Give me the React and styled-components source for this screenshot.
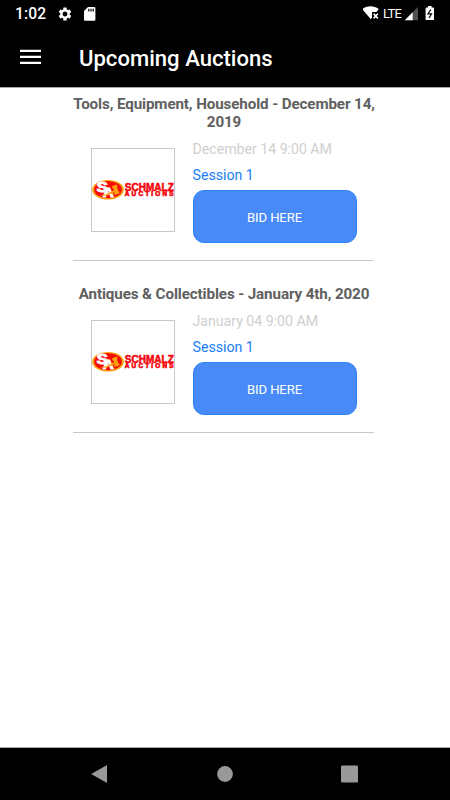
import React from "react";
import styled, { createGlobalStyle } from "styled-components";
import { MdSettings } from "react-icons/md";

const GlobalStyle = createGlobalStyle`
  * { box-sizing: border-box; }
  html, body { margin: 0; padding: 0; background: #fff; }
  body { font-family: Roboto, "Liberation Sans", sans-serif; }
`;

const Screen = styled.div`
  width: 450px;
  height: 800px;
  display: flex;
  flex-direction: column;
  overflow: hidden;
  background: #fff;
`;

const StatusBar = styled.div`
  height: 27px;
  flex: none;
  display: flex;
  align-items: center;
  justify-content: space-between;
  padding: 0 15px 0 15px;
  background: #000;
  color: #fff;
`;

const StatusGroup = styled.div`
  display: flex;
  align-items: center;
  height: 27px;
`;

const Clock = styled.span`
  width: 42px;
  font-size: 15.6px;
  font-weight: 500;
  line-height: 27px;
  padding-top: 1px;
  letter-spacing: 0.1px;
`;

const Network = styled.span`
  width: 21px;
  font-size: 13px;
  line-height: 27px;
  letter-spacing: -0.7px;
  margin-left: -1px;
  margin-right: 1px;
`;

const Gear = styled(MdSettings)`
  width: 16px;
  height: 16px;
  margin-right: 11px;
`;

const AppBar = styled.header`
  height: 61px;
  flex: none;
  display: flex;
  align-items: center;
  padding: 0 20px 1px;
  background: #000;
  border-bottom: 1px solid #a8a8a8;
  color: #fff;
`;

const MenuButton = styled.button`
  width: 59px;
  height: 40px;
  padding: 0;
  border: 0;
  background: none;
  color: #fff;
  display: flex;
  align-items: center;
`;

const PageTitle = styled.h1`
  margin: 2px 0 0;
  font-size: 22.1px;
  font-weight: 500;
  line-height: 28px;
  white-space: nowrap;
`;

const AuctionList = styled.main`
  flex: 1;
  display: flex;
  flex-direction: column;
  align-items: center;
  gap: 24px;
  padding: 7px 3px 0 0;
`;

const Auction = styled.section`
  width: 301px;
  border-bottom: 1px solid #c8c8c8;
  padding-bottom: 17px;
`;

const AuctionTitle = styled.h2`
  margin: 0 -4px;
  padding-left: 1px;
  text-align: center;
  font-size: 15.2px;
  font-weight: 700;
  line-height: 18px;
  letter-spacing: -0.12px;
  color: #606060;
`;

const AuctionBody = styled.div`
  display: flex;
  padding-left: 18px;
  gap: 17.5px;
`;

const Thumb = styled.div`
  width: 84px;
  height: 84px;
  margin-top: 17px;
  border: 1px solid #c8c8c8;
  display: flex;
  align-items: center;
  justify-content: center;
`;

const Details = styled.div`
  width: 164px;
  display: flex;
  flex-direction: column;
  padding-top: 5px;
`;

const Line = styled.div`
  height: 26px;
  line-height: 26px;
  font-size: 14.2px;
  letter-spacing: -0.03px;
  white-space: nowrap;
  color: ${(p) => (p.$link ? "#1a7df5" : "#cfcfcf")};
`;

const BidButton = styled.button`
  height: 53px;
  margin-top: 2px;
  padding: 1px 0 0;
  border: 1px solid #2a82f6;
  border-radius: 11px;
  background: #488bf8;
  color: #fff;
  font: 400 13.1px Roboto, "Liberation Sans", sans-serif;
  letter-spacing: -0.1px;
`;

const NavBar = styled.nav`
  height: 53px;
  flex: none;
  display: flex;
  align-items: center;
  justify-content: space-between;
  padding: 0 91px 1px 90px;
  background: #000;
  border-top: 1px solid #a8a8a8;
`;

const SdCard = () => (
  <svg width="12" height="14" viewBox="0 0 12 14">
    <path d="M4 0h6.2A1.2 1.2 0 0 1 11.4 1.2v11.3a1.2 1.2 0 0 1-1.2 1.2H1.2A1.2 1.2 0 0 1 0 12.5V4z" fill="#fff" />
    <path d="M4.8 1.8v2.6M7 1.8v2.6M9.2 1.8v2.6" stroke="#000" strokeWidth="1.2" />
  </svg>
);

const Wifi = () => (
  <svg width="21" height="15" viewBox="0 0 21 15">
    <path d="M-.8 3C4.4-.7 10.6-.7 15.8 3L13.4 6H9v5.4L7.8 13.2z" fill="#fff" />
    <path d="M10.6 7.8l4.2 4.6M14.8 7.8l-4.2 4.6" stroke="#fff" strokeWidth="1.6" />
  </svg>
);

const Signal = () => (
  <svg width="20" height="14" viewBox="0 0 20 14">
    <path d="M13 0v13.3H-.4z" fill="#505050" />
    <path d="M7.7 5.2v8.1H-.4z" fill="#fff" />
  </svg>
);

const Battery = () => (
  <svg width="10" height="15" viewBox="0 0 10 15">
    <path d="M3 0h3.6v1.5h1.5q.9 0 .9.9v10.8q0 .9-.9.9H1.5q-.9 0-.9-.9V2.4q0-.9.9-.9H3z" fill="#fff" />
    <path d="M5.7 3.6L3 7.8h3.6L4 12" fill="none" stroke="#000" strokeWidth="1.2" />
  </svg>
);

const MenuIcon = () => (
  <svg width="22" height="16" viewBox="0 0 22 16">
    <path d="M0 1.8h21M0 7.8h21M0 13.8h21" stroke="#fff" strokeWidth="2.3" />
  </svg>
);

const SchmalzLogo = () => (
  <svg width="82" height="22" viewBox="0 0 82 22" fontFamily='"Liberation Sans", sans-serif' fontWeight="700">
    <ellipse cx="16" cy="10.7" rx="15.8" ry="9.8" fill="#f9a20d" />
    <ellipse cx="16" cy="10.7" rx="13.8" ry="8.6" fill="#f70b08" />
    <g fill="#fff" stroke="#fff" strokeWidth="1">
      <text x="4.8" y="12.6" fontSize="14" textLength="11" lengthAdjust="spacingAndGlyphs">S</text>
      <text x="10.8" y="17.6" fontSize="13.5" textLength="11" lengthAdjust="spacingAndGlyphs">A</text>
    </g>
    <path d="M7 16.3q8 0 14.5-5.1l1.2 1.5Q15.5 18 7 16.3z" fill="#f9a20d" />
    <path d="M20 7.3l4.8-1.9.9 2-.7.5 1.2 4.3 1 .1.4 2-5 1.8-.7-2 .7-.5-1.1-4.1-.9-.1z" fill="#f9a20d" />
    <g fill="#f5060b" stroke="#f5060b">
      <text x="32.8" y="11.6" fontSize="10.6" strokeWidth=".55" textLength="49" lengthAdjust="spacingAndGlyphs">SCHMALZ</text>
      <text x="32.8" y="16.8" fontSize="6.4" strokeWidth=".6" textLength="48.8">AUCTIONS</text>
    </g>
  </svg>
);

const BackIcon = () => (
  <svg width="18" height="20" viewBox="0 0 18 20">
    <path d="M1.2 10L17 .9v18.2z" fill="#999" />
  </svg>
);

const HomeIcon = () => (
  <svg width="16" height="16" viewBox="0 0 16 16">
    <circle cx="8" cy="8" r="7.9" fill="#999" />
  </svg>
);

const RecentsIcon = () => (
  <svg width="18" height="18" viewBox="0 0 18 18">
    <rect x="0" y=".5" width="17" height="17" rx="1.3" fill="#999" />
  </svg>
);

const auctions = [
  { title: "Tools, Equipment, Household - December 14, 2019", date: "December 14 9:00 AM" },
  { title: "Antiques & Collectibles - January 4th, 2020", date: "January 04 9:00 AM" },
];

export default function App() {
  return (
    <Screen>
      <GlobalStyle />
      <StatusBar>
        <StatusGroup>
          <Clock>1:02</Clock>
          <Gear />
          <SdCard />
        </StatusGroup>
        <StatusGroup>
          <Wifi />
          <Network>LTE</Network>
          <Signal />
          <Battery />
        </StatusGroup>
      </StatusBar>
      <AppBar>
        <MenuButton aria-label="Menu"><MenuIcon /></MenuButton>
        <PageTitle>Upcoming Auctions</PageTitle>
      </AppBar>
      <AuctionList>
        {auctions.map((a) => (
          <Auction key={a.title}>
            <AuctionTitle>{a.title}</AuctionTitle>
            <AuctionBody>
              <Thumb><SchmalzLogo /></Thumb>
              <Details>
                <Line>{a.date}</Line>
                <Line $link>Session 1</Line>
                <BidButton>BID HERE</BidButton>
              </Details>
            </AuctionBody>
          </Auction>
        ))}
      </AuctionList>
      <NavBar>
        <BackIcon />
        <HomeIcon />
        <RecentsIcon />
      </NavBar>
    </Screen>
  );
}
